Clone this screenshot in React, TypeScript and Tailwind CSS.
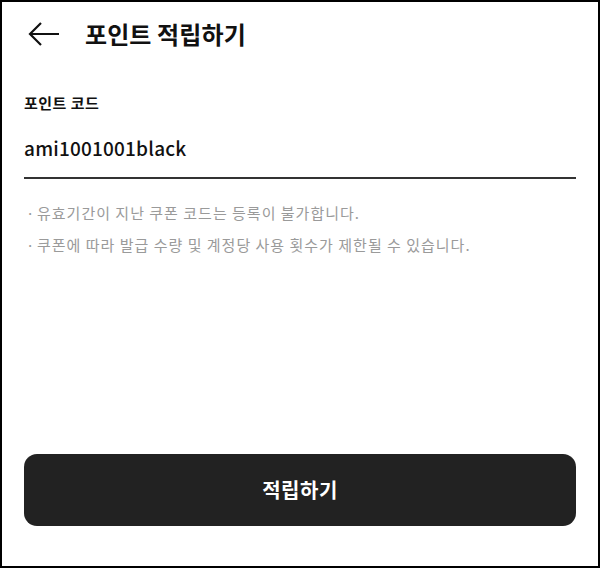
const font = { fontFamily: '"Noto Sans CJK KR", "Noto Sans", sans-serif' }

export default function App() {
  return (
    <div
      className="w-[600px] h-[568px] border-2 border-black bg-white flex flex-col px-[22px] text-[#111]"
      style={font}
    >
      <div className="flex items-center h-[64px]">
        <svg width="32" height="26" viewBox="0 0 32 26" fill="none" className="ml-[4px]">
          <path d="M31 13H2M13 2L2 13l11 11" stroke="#111" strokeWidth="2.2" />
        </svg>
        <h1 className="ml-[25px] text-[24px] font-bold tracking-[0.1px]">포인트 적립하기</h1>
      </div>

      <div className="mt-[27px] text-[15px] font-semibold leading-[20px] tracking-[0.5px]">포인트 코드</div>
      <div className="mt-[23px] text-[19px] font-medium leading-[24px] tracking-[0.2px]">ami1001001black</div>
      <div className="mt-[17px] h-[2px] bg-[#333]" />

      <ul className="mt-[24px] flex flex-col gap-[12px] text-[15px] text-[#9a9a9a] leading-[20px] tracking-[1px]">
        <li className="flex">
          <span className="w-[13px] pl-[2px]">·</span>
          <span>유효기간이 지난 쿠폰 코드는 등록이 불가합니다.</span>
        </li>
        <li className="flex">
          <span className="w-[13px] pl-[2px]">·</span>
          <span>쿠폰에 따라 발급 수량 및 계정당 사용 횟수가 제한될 수 있습니다.</span>
        </li>
      </ul>

      <button className="mt-auto mb-[40px] h-[72px] rounded-[13px] bg-[#222] text-white text-[20px] font-bold tracking-[0.5px]">
        적립하기
      </button>
    </div>
  )
}
